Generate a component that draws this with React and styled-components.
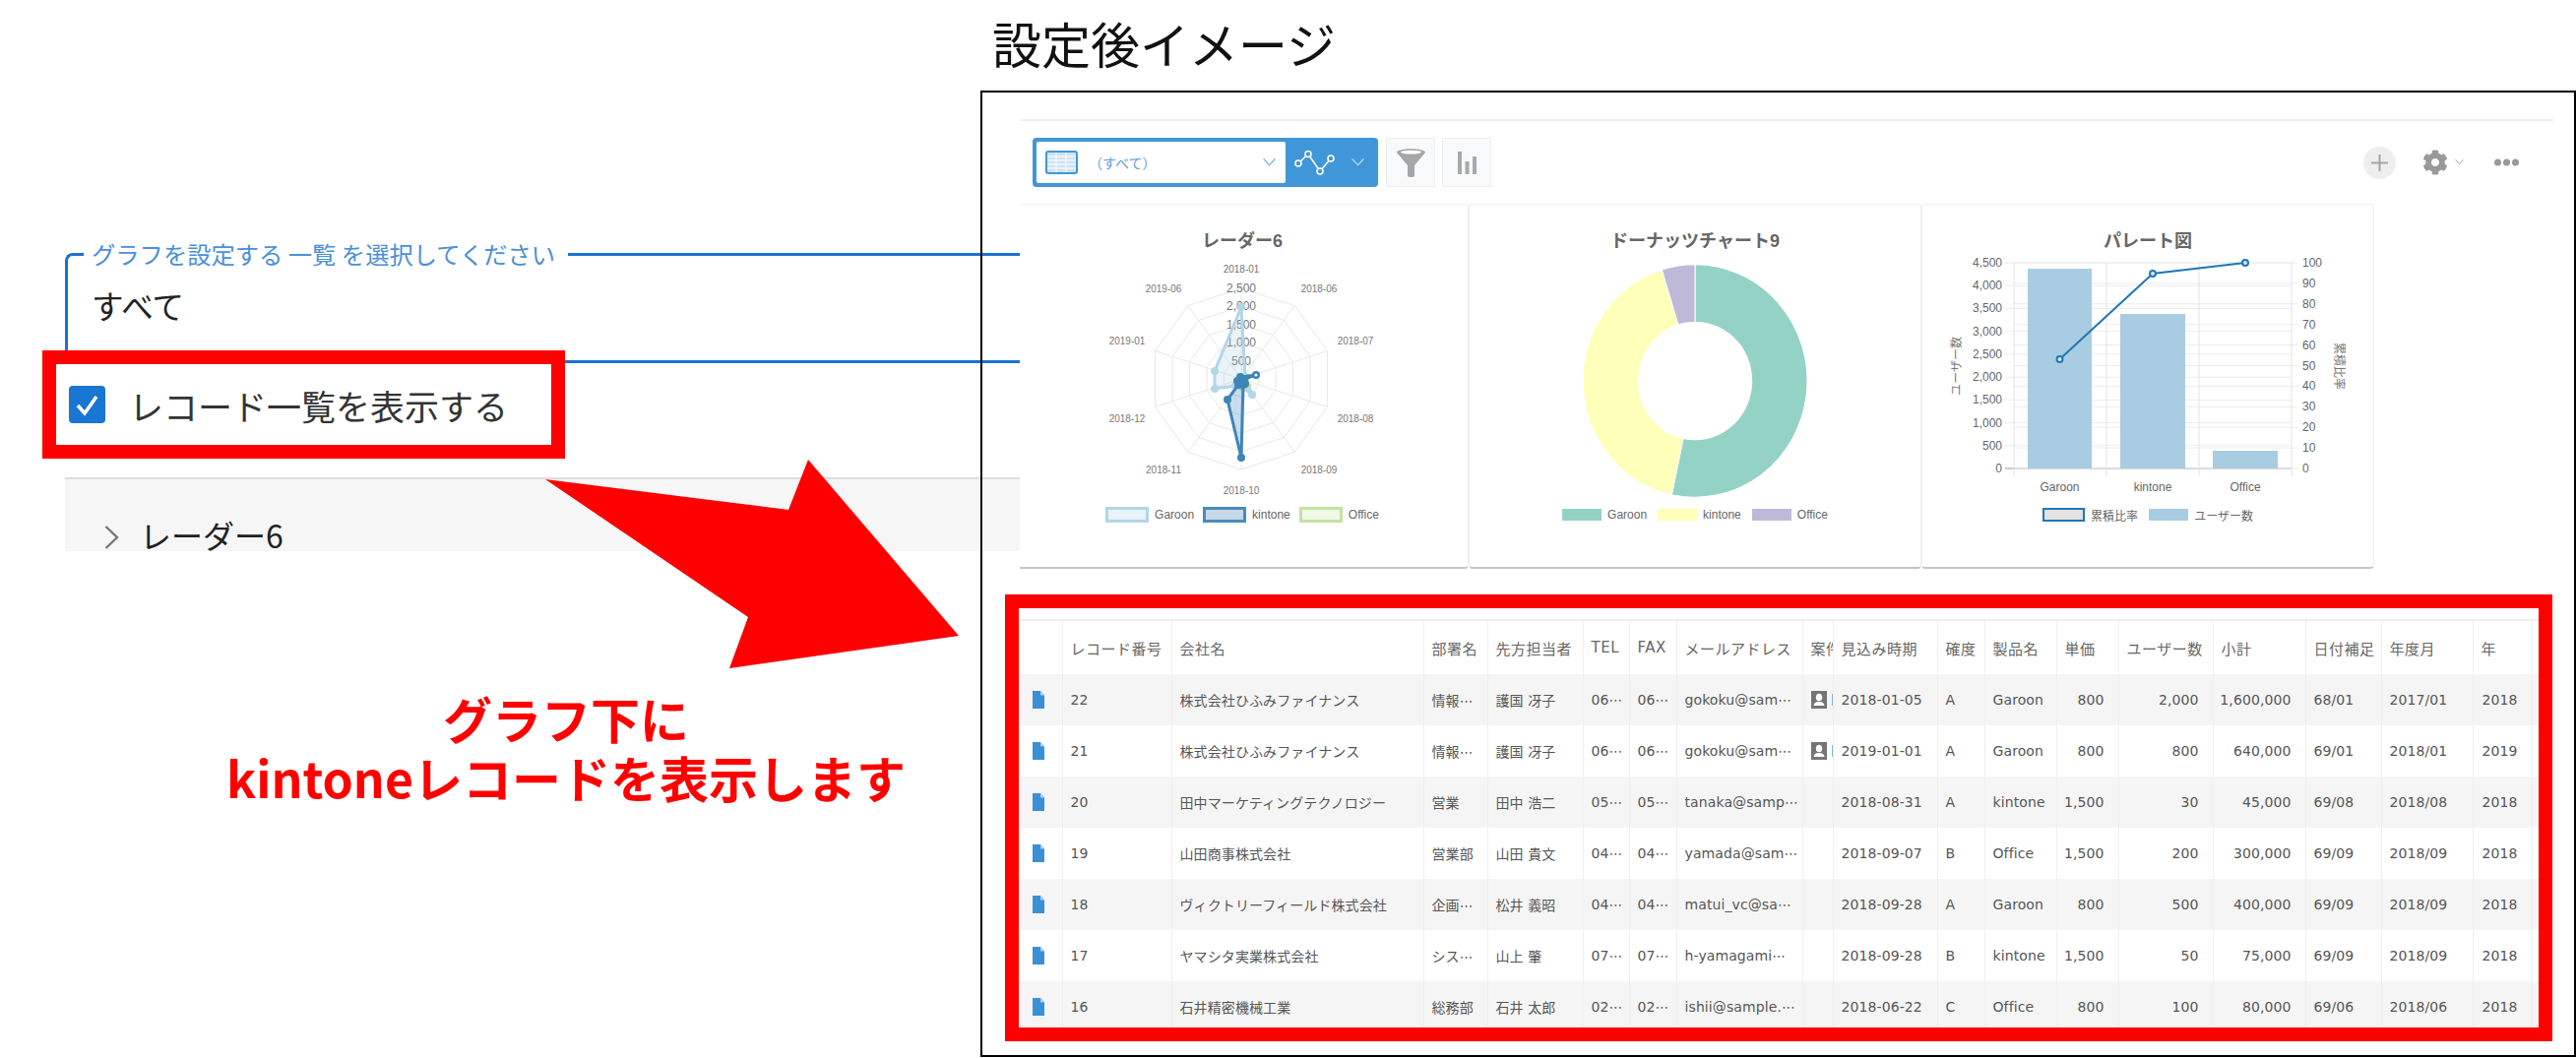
import styled, { createGlobalStyle } from "styled-components";
import { FaCog } from "react-icons/fa";

const JP = `"Noto Sans CJK JP", sans-serif`;
const CHART_FONT = `"Liberation Sans", "Noto Sans CJK JP", sans-serif`;

const columns = [
  { label: "", width: 44 },
  { label: "レコード番号", width: 111 },
  { label: "会社名", width: 256 },
  { label: "部署名", width: 65 },
  { label: "先方担当者", width: 97 },
  { label: "TEL", width: 47 },
  { label: "FAX", width: 48 },
  { label: "メールアドレス", width: 128 },
  { label: "案件", width: 31 },
  { label: "見込み時期", width: 106 },
  { label: "確度", width: 48 },
  { label: "製品名", width: 73 },
  { label: "単価", width: 63, right: true },
  { label: "ユーザー数", width: 96, right: true },
  { label: "小計", width: 94, right: true },
  { label: "日付補足", width: 77 },
  { label: "年度月", width: 93 },
  { label: "年", width: 60, right: true },
  { label: "", width: 7 },
];

const records = [
  ["22", "株式会社ひふみファイナンス", "情報⋯", "護国 冴子", "06⋯", "06⋯", "gokoku@sam⋯", true, "2018-01-05", "A", "Garoon", "800", "2,000", "1,600,000", "68/01", "2017/01", "2018"],
  ["21", "株式会社ひふみファイナンス", "情報⋯", "護国 冴子", "06⋯", "06⋯", "gokoku@sam⋯", true, "2019-01-01", "A", "Garoon", "800", "800", "640,000", "69/01", "2018/01", "2019"],
  ["20", "田中マーケティングテクノロジー", "営業", "田中 浩二", "05⋯", "05⋯", "tanaka@samp⋯", false, "2018-08-31", "A", "kintone", "1,500", "30", "45,000", "69/08", "2018/08", "2018"],
  ["19", "山田商事株式会社", "営業部", "山田 貴文", "04⋯", "04⋯", "yamada@sam⋯", false, "2018-09-07", "B", "Office", "1,500", "200", "300,000", "69/09", "2018/09", "2018"],
  ["18", "ヴィクトリーフィールド株式会社", "企画⋯", "松井 義昭", "04⋯", "04⋯", "matui_vc@sa⋯", false, "2018-09-28", "A", "Garoon", "800", "500", "400,000", "69/09", "2018/09", "2018"],
  ["17", "ヤマシタ実業株式会社", "シス⋯", "山上 肇", "07⋯", "07⋯", "h-yamagami⋯", false, "2018-09-28", "B", "kintone", "1,500", "50", "75,000", "69/09", "2018/09", "2018"],
  ["16", "石井精密機械工業", "総務部", "石井 太郎", "02⋯", "02⋯", "ishii@sample.⋯", false, "2018-06-22", "C", "Office", "800", "100", "80,000", "69/06", "2018/06", "2018"],
];

const radarLabels = [
  ["2018-01", 1261, 274],
  ["2018-06", 1340, 294],
  ["2018-07", 1377, 347],
  ["2018-08", 1377, 426],
  ["2018-09", 1340, 478],
  ["2018-10", 1261, 499],
  ["2018-11", 1182, 478],
  ["2018-12", 1145, 426],
  ["2019-01", 1145, 347],
  ["2019-06", 1182, 294],
];

const radarTicks = [
  ["2,500", 294],
  ["2,000", 312],
  ["1,500", 331],
  ["1,000", 349],
  ["500", 368],
];

const garoonPoints = [[1261, 313], [1265, 384], [1272, 402], [1262, 394], [1255, 393], [1234, 396], [1234, 378]];
const kintonePoints = [[1260, 384], [1276, 382], [1264, 386], [1265, 391], [1263, 392], [1261, 466], [1247, 407], [1258, 392], [1257, 388]];
const officePoints = [[1263, 383], [1267, 385], [1268, 393], [1263, 396], [1256, 390]];

function decagon(cx, cy, r) {
  const pts = [];
  for (let i = 0; i < 10; i++) {
    const a = (i * Math.PI) / 5;
    pts.push([cx + r * Math.sin(a), cy - r * Math.cos(a)]);
  }
  return pts;
}

function toPoints(list) {
  return list.map((p) => p.join(",")).join(" ");
}

function RadarChart() {
  const cx = 1261;
  const cy = 386;
  return (
    <ChartSvg viewBox="1033 260 458 250">
      {[1, 2, 3, 4, 5].map((n) => (
        <polygon key={n} points={toPoints(decagon(cx, cy, n * 18.4))} fill="none" stroke="#e8e8e8" />
      ))}
      {decagon(cx, cy, 92).map((p, i) => (
        <line key={i} x1={cx} y1={cy} x2={p[0]} y2={p[1]} stroke="#e8e8e8" />
      ))}
      {radarLabels.map(([t, x, y]) => (
        <text key={t} x={x} y={y + 4} fontSize="10" fill="#777" textAnchor="middle">
          {t}
        </text>
      ))}
      {radarTicks.map(([t, y]) => (
        <text key={t} x={cx} y={y + 4} fontSize="12" fill="#777" textAnchor="middle">
          {t}
        </text>
      ))}
      <polygon points={toPoints(garoonPoints)} fill="#a6cee3" fillOpacity="0.25" stroke="#b3d5e8" strokeWidth="3" />
      {garoonPoints.map((p, i) => (
        <circle key={i} cx={p[0]} cy={p[1]} r="4" fill="#b3d5e8" />
      ))}
      <polygon points={toPoints(officePoints)} fill="#b2df8a" fillOpacity="0.25" stroke="#c2e3a0" strokeWidth="3" />
      {officePoints.map((p, i) => (
        <circle key={i} cx={p[0]} cy={p[1]} r="3" fill="#c2e3a0" />
      ))}
      <polygon points={toPoints(kintonePoints)} fill="#1f78b4" fillOpacity="0.25" stroke="#3d85b8" strokeWidth="3" />
      {kintonePoints.map((p, i) => (
        <circle key={i} cx={p[0]} cy={p[1]} r="4" fill="#3d85b8" />
      ))}
      <circle cx="1276" cy="382" r="1.5" fill="#fff" />
    </ChartSvg>
  );
}

function slicePath(start, end, outer, inner) {
  const rad = (d) => ((d - 90) * Math.PI) / 180;
  const pt = (r, d) => `${(r * Math.cos(rad(d))).toFixed(2)} ${(r * Math.sin(rad(d))).toFixed(2)}`;
  const large = end - start > 180 ? 1 : 0;
  return `M${pt(outer, start)} A${outer} ${outer} 0 ${large} 1 ${pt(outer, end)} L${pt(inner, end)} A${inner} ${inner} 0 ${large} 0 ${pt(inner, start)} Z`;
}

function DonutChart() {
  return (
    <ChartSvg viewBox="1493 260 458 250">
      <g transform="translate(1722 388) scale(1 1.037)" stroke="#fff" strokeWidth="1">
        <path d={slicePath(0, 192, 114, 57.7)} fill="#94d2c5" />
        <path d={slicePath(192, 342.8, 114, 57.7)} fill="#feffb8" />
        <path d={slicePath(342.8, 360, 114, 57.7)} fill="#bfb9d9" />
      </g>
    </ChartSvg>
  );
}

function ParetoChart() {
  const left = [0, 1, 2, 3, 4, 5, 6, 7, 8, 9];
  const right = [0, 1, 2, 3, 4, 5, 6, 7, 8, 9, 10];
  const linePts = [[2092.5, 366], [2187, 279], [2281, 268]];
  return (
    <ChartSvg viewBox="1953 260 458 250">
      {left.map((i) => {
        const y = 477 - i * 23.22;
        return (
          <g key={i}>
            <line x1="2037" y1={y} x2="2328" y2={y} stroke={i === 0 ? "#ccc" : "#ececec"} strokeWidth={i === 0 ? 2 : 1} />
            <text x="2034" y={y + 4} fontSize="12" fill="#666" textAnchor="end">
              {(i * 500).toLocaleString("en-US")}
            </text>
          </g>
        );
      })}
      {right.map((i) => {
        const y = 477 - i * 20.9;
        return (
          <g key={i}>
            <line x1="2046" y1={y} x2="2335" y2={y} stroke="#ececec" />
            <text x="2339" y={y + 4} fontSize="12" fill="#666">
              {i * 10}
            </text>
          </g>
        );
      })}
      {[2046, 2140, 2234, 2328].map((x) => (
        <line key={x} x1={x} y1="268" x2={x} y2="485" stroke="#e2e2e2" />
      ))}
      <rect x="2060" y="274" width="65" height="203" fill="#a8cce2" />
      <rect x="2154" y="320" width="66" height="157" fill="#a8cce2" />
      <rect x="2248" y="459" width="66" height="18" fill="#a8cce2" />
      <polyline points={toPoints(linePts)} fill="none" stroke="#1f78b4" strokeWidth="2" />
      {linePts.map((p, i) => (
        <circle key={i} cx={p[0]} cy={p[1]} r="3" fill="#d9e6f0" stroke="#1f78b4" strokeWidth="2" />
      ))}
      {[["Garoon", 2092.5], ["kintone", 2187], ["Office", 2281]].map(([t, x]) => (
        <text key={t} x={x} y="500" fontSize="12" fill="#666" textAnchor="middle">
          {t}
        </text>
      ))}
      <text transform="translate(1992 373) rotate(-90)" fontSize="12" fill="#777" textAnchor="middle">
        ユーザー数
      </text>
      <text transform="translate(2372 373) rotate(90)" fontSize="12" fill="#777" textAnchor="middle">
        累積比率
      </text>
    </ChartSvg>
  );
}

function Chevron({ size = 13, color = "#5a9fdc" }) {
  return (
    <svg width={size} height={size * 0.6} viewBox="0 0 13 8" fill="none" stroke={color} strokeWidth="1.1">
      <polyline points="0.5,0.5 6.5,7 12.5,0.5" />
    </svg>
  );
}

function TableIcon() {
  return (
    <svg width="33" height="24" viewBox="0 0 33 24">
      <rect x="1" y="1" width="31" height="22" rx="2" fill="#cfe3f4" stroke="#4097d9" strokeWidth="2" />
      {[6, 10, 14, 18].map((y) => (
        <line key={y} x1="2" y1={y} x2="31" y2={y} stroke="#fff" />
      ))}
      {[11, 21].map((x) => (
        <line key={x} x1={x} y1="2" x2={x} y2="22" stroke="#fff" />
      ))}
    </svg>
  );
}

function LineIcon() {
  return (
    <svg width="41" height="25" viewBox="0 0 41 25" fill="none" stroke="#fff" strokeWidth="1.6">
      <polyline points="4,13 14,3.5 26,21 37,8" />
      <circle cx="4" cy="13" r="3" fill="#3f97d9" />
      <circle cx="14" cy="3.5" r="3" fill="#3f97d9" />
      <circle cx="26" cy="21" r="3" fill="#3f97d9" />
      <circle cx="37" cy="8" r="3" fill="#3f97d9" />
    </svg>
  );
}

function FunnelIcon() {
  return (
    <svg width="29" height="29" viewBox="0 0 29 29">
      <path d="M0 4C0 -1 29 -1 29 4L18 17V27a2 2 0 0 1-2 2h-3a2 2 0 0 1-2-2V17Z" fill="#a6a6a6" />
      <ellipse cx="14.5" cy="3.6" rx="10.5" ry="1.9" fill="#fff" />
    </svg>
  );
}

function BarsIcon() {
  return (
    <svg width="19" height="23" viewBox="0 0 19 23" fill="#a8a8a8">
      <rect x="0" y="0" width="4" height="23" />
      <rect x="7.5" y="10" width="4" height="13" />
      <rect x="15" y="5" width="4" height="18" />
    </svg>
  );
}

function PlusIcon() {
  return (
    <svg width="17" height="17" viewBox="0 0 17 17" stroke="#a6a6a6" strokeWidth="2">
      <line x1="8.500" y1="0" x2="8.500" y2="17" />
      <line x1="0" y1="8.500" x2="17" y2="8.500" />
    </svg>
  );
}

function DocIcon() {
  return (
    <svg width="12" height="18" viewBox="0 0 12 18">
      <path d="M0 0H8L12 4.500V18H0Z" fill="#3b8fd5" />
      <path d="M8 0L12 4.500H8Z" fill="#a9d0ee" />
    </svg>
  );
}

function PersonIcon() {
  return (
    <PersonSvg width="16" height="18" viewBox="0 0 16 18">
      <rect width="16" height="18" fill="#757575" />
      <ellipse cx="8" cy="6.500" rx="3.200" ry="3.800" fill="#fff" />
      <path d="M2.500 15C3 11.500 5.500 11 8 11S13 11.500 13.500 15Z" fill="#fff" />
    </PersonSvg>
  );
}

function DotsIcon() {
  return (
    <svg width="25" height="8" viewBox="0 0 25 8" fill="#999">
      <circle cx="3.500" cy="4" r="3.500" />
      <circle cx="12.500" cy="4" r="3.500" />
      <circle cx="21.500" cy="4" r="3.500" />
    </svg>
  );
}

function ChartLegend({ items, wide }) {
  return (
    <Legend $wide={wide}>
      {items.map((item) => (
        <LegendItem key={item.label}>
          <Swatch $w={item.w} $h={item.h} $border={item.border} $borderWidth={item.borderWidth} $fill={item.fill} />
          {item.label}
        </LegendItem>
      ))}
    </Legend>
  );
}

export default function App() {
  return (
    <>
      <GlobalStyle />
      <Page>
        <PageTitle>設定後イメージ</PageTitle>
        <Body>
          <LeftColumn>
            <ViewField>
              <ViewLegend>グラフを設定する 一覧 を選択してください</ViewLegend>
              <ViewValue>すべて</ViewValue>
            </ViewField>
            <CheckRow>
              <CheckBox>
                <svg width="25" height="25" viewBox="0 0 25 25" fill="none" stroke="#fff" strokeWidth="3.500">
                  <polyline points="3,13 10,21 22,4" />
                </svg>
              </CheckBox>
              <CheckLabel>レコード一覧を表示する</CheckLabel>
            </CheckRow>
            <GreyPanel>
              <svg width="15" height="24" viewBox="0 0 15 24" fill="none" stroke="#777" strokeWidth="2.400">
                <polyline points="1.500,1 13,12 1.500,23" />
              </svg>
              <PanelLabel>レーダー6</PanelLabel>
            </GreyPanel>
            <Callout>
              グラフ下に
              <br />
              kintoneレコードを表示します
            </Callout>
          </LeftColumn>
          <RightColumn>
            <TopRule />
            <Toolbar>
              <Selector>
                <SelectorField>
                  <TableIcon />
                  <SelectorText>（すべて）</SelectorText>
                  <SelectorChevron>
                    <Chevron />
                  </SelectorChevron>
                </SelectorField>
                <SelectorGraph>
                  <LineIcon />
                  <Chevron color="#d5e8f7" />
                </SelectorGraph>
              </Selector>
              <ToolButton>
                <FunnelIcon />
              </ToolButton>
              <ToolButton>
                <BarsIcon />
              </ToolButton>
              <ToolbarRight>
                <PlusButton>
                  <PlusIcon />
                </PlusButton>
                <GearGroup>
                  <FaCog size={26} color="#999" />
                  <Chevron size={9} color="#888" />
                </GearGroup>
                <DotsIcon />
              </ToolbarRight>
            </Toolbar>
            <CardRow>
              <Card $first>
                <CardTitle>レーダー6</CardTitle>
                <RadarChart />
                <ChartLegend
                  wide
                  items={[
                    { label: "Garoon", w: 44, h: 16, border: "#b3d5e8", borderWidth: 3, fill: "#e9f3f9" },
                    { label: "kintone", w: 44, h: 16, border: "#4a8bbd", borderWidth: 3, fill: "#c5d9e8" },
                    { label: "Office", w: 44, h: 16, border: "#c2e3a0", borderWidth: 3, fill: "#f0f8e8" },
                  ]}
                />
              </Card>
              <Card>
                <CardTitle>ドーナッツチャート9</CardTitle>
                <DonutChart />
                <ChartLegend
                  items={[
                    { label: "Garoon", w: 40, h: 12, fill: "#94d2c5" },
                    { label: "kintone", w: 40, h: 12, fill: "#feffb8" },
                    { label: "Office", w: 40, h: 12, fill: "#bfb9d9" },
                  ]}
                />
              </Card>
              <Card>
                <CardTitle>パレート図</CardTitle>
                <ParetoChart />
                <ChartLegend
                  items={[
                    { label: "累積比率", w: 43, h: 14, border: "#1f78b4", borderWidth: 2, fill: "#e3e3e3" },
                    { label: "ユーザー数", w: 40, h: 12, fill: "#a8cce2" },
                  ]}
                />
              </Card>
            </CardRow>
            <TableHighlight>
              <RecordTable>
                <colgroup>
                  {columns.map((c, i) => (
                    <col key={i} width={c.width} />
                  ))}
                </colgroup>
                <thead>
                  <tr>
                    {columns.map((c, i) => (
                      <HeadCell key={i}>{c.label}</HeadCell>
                    ))}
                  </tr>
                </thead>
                <tbody>
                  {records.map((row) => (
                    <Row key={row[0]}>
                      <Cell>
                        <DocCell>
                          <DocIcon />
                        </DocCell>
                      </Cell>
                      {row.map((value, i) => (
                        <Cell key={i} $right={columns[i + 1].right}>
                          {value === true ? (
                            <PersonCell>
                              <PersonIcon />
                              <PersonLink />
                            </PersonCell>
                          ) : (
                            value || ""
                          )}
                        </Cell>
                      ))}
                      <Cell />
                    </Row>
                  ))}
                </tbody>
              </RecordTable>
            </TableHighlight>
          </RightColumn>
          <Frame />
          <Arrow viewBox="554 467 420 212">
            <polygon points="554,487 801,518 821,467 974,646 741,679 760,627" fill="#ff0000" />
          </Arrow>
        </Body>
      </Page>
    </>
  );
}

const GlobalStyle = createGlobalStyle`
  html, body {
    margin: 0;
    padding: 0;
    background: #fff;
  }
`;

const Page = styled.div`
  width: 2617px;
  height: 1075px;
  overflow: hidden;
  background: #fff;
  font-family: ${JP};
`;

const PageTitle = styled.div`
  height: 92px;
  padding-left: 1008px;
  box-sizing: border-box;
  font-size: 50px;
  line-height: 86px;
  color: #111;
`;

const Body = styled.div`
  position: relative;
  display: flex;
  height: 983px;
`;

const LeftColumn = styled.div`
  width: 1036px;
  flex: none;
  padding-top: 151px;
  box-sizing: border-box;
`;

const ViewField = styled.fieldset`
  margin: 0 0 0 66px;
  padding: 0 0 0 27px;
  height: 126px;
  box-sizing: border-box;
  border: 3px solid #1a73d2;
  border-right: none;
  border-radius: 8px 0 0 0;
`;

const ViewLegend = styled.legend`
  margin-left: -11px;
  padding: 0 13px 0 8px;
  font-size: 24.300px;
  line-height: 30px;
  color: #4a90d9;
  white-space: nowrap;
`;

const ViewValue = styled.div`
  margin: 15px 0 0 -3px;
  font-size: 32.500px;
  line-height: 44px;
  color: #222;
`;

const CheckRow = styled.div`
  position: relative;
  display: flex;
  align-items: center;
  gap: 24px;
  margin: -13px 0 0 43px;
  width: 531px;
  height: 110px;
  box-sizing: border-box;
  border: 14px solid #ff0000;
  padding-left: 13px;
  background: #fff;
`;

const CheckBox = styled.div`
  display: flex;
  align-items: center;
  justify-content: center;
  width: 37px;
  height: 38px;
  border-radius: 4px;
  background: #1976d2;
`;

const CheckLabel = styled.span`
  font-size: 35px;
  color: #333;
  white-space: nowrap;
`;

const GreyPanel = styled.div`
  display: flex;
  align-items: center;
  gap: 21px;
  margin: 19px 0 0 66px;
  padding: 44px 0 0 40px;
  height: 75px;
  box-sizing: border-box;
  border-top: 2px solid #ddd;
  background: #f6f6f6;
  overflow: hidden;
`;

const PanelLabel = styled.span`
  margin-bottom: 5px;
  font-size: 32px;
  line-height: 30px;
  color: #222;
`;

const Callout = styled.div`
  margin-top: 139px;
  padding-left: 114px;
  text-align: center;
  font-size: 50px;
  line-height: 60px;
  font-weight: 700;
  color: #ff0000;
`;

const RightColumn = styled.div`
  flex: 1;
  display: flex;
  flex-direction: column;
  background: #fff;
`;

const TopRule = styled.div`
  width: 1558px;
  height: 2px;
  margin-top: 29px;
  background: #eee;
`;

const Toolbar = styled.div`
  display: flex;
  align-items: center;
  gap: 7px;
  width: 1558px;
  height: 50px;
  box-sizing: border-box;
  margin-top: 17px;
  padding: 0 35px 0 13px;
`;

const Selector = styled.div`
  display: flex;
  align-items: center;
  width: 351px;
  height: 50px;
  box-sizing: border-box;
  margin-right: 1px;
  padding: 4px;
  border-radius: 4px;
  background: #3f97d9;
`;

const SelectorField = styled.div`
  display: flex;
  align-items: center;
  gap: 11px;
  width: 253px;
  height: 42px;
  box-sizing: border-box;
  padding: 0 10px 0 9px;
  border-radius: 2px;
  background: #fff;
`;

const SelectorText = styled.span`
  font-size: 14px;
  color: #5a9fdc;
`;

const SelectorChevron = styled.span`
  display: flex;
  margin-left: auto;
`;

const SelectorGraph = styled.div`
  display: flex;
  align-items: center;
  gap: 17px;
  padding-left: 9px;
`;

const ToolButton = styled.div`
  display: flex;
  align-items: center;
  justify-content: center;
  width: 50px;
  height: 50px;
  box-sizing: border-box;
  border: 1px solid #eee;
  background: #f7f9fa;
`;

const ToolbarRight = styled.div`
  display: flex;
  align-items: center;
  gap: 32px;
  margin-left: auto;
`;

const PlusButton = styled.div`
  display: flex;
  align-items: center;
  justify-content: center;
  width: 33px;
  height: 33px;
  border-radius: 50%;
  background: #eee;
`;

const GearGroup = styled.div`
  display: flex;
  align-items: center;
  gap: 7px;
  margin: 0 -1px 0 -5px;
`;

const CardRow = styled.div`
  display: flex;
  height: 373px;
  margin-top: 17px;
  overflow: hidden;
`;

const Card = styled.div`
  flex: none;
  display: flex;
  flex-direction: column;
  width: 460px;
  height: 371px;
  box-sizing: border-box;
  margin-left: ${(p) => (p.$first ? "-4px" : "0")};
  border: 1px solid #eee;
  border-bottom: 2px solid #c4c4c4;
  border-radius: 4px;
  background: #fff;
  font-family: ${CHART_FONT};
`;

const CardTitle = styled.div`
  margin-top: 25px;
  height: 26px;
  font-size: 18px;
  line-height: 25px;
  font-weight: 700;
  color: #666;
  text-align: center;
`;

const ChartSvg = styled.svg`
  flex: none;
  display: block;
  width: 458px;
  height: 250px;
  font-family: ${CHART_FONT};
`;

const Legend = styled.div`
  display: flex;
  justify-content: center;
  gap: ${(p) => (p.$wide ? "9px" : "11px")};
  height: 16px;
  margin-top: 6px;
`;

const LegendItem = styled.div`
  display: flex;
  align-items: center;
  gap: 6px;
  font-size: 12px;
  color: #666;
  white-space: nowrap;
`;

const Swatch = styled.span`
  width: ${(p) => p.$w}px;
  height: ${(p) => p.$h}px;
  box-sizing: border-box;
  border: ${(p) => (p.$border ? `${p.$borderWidth}px solid ${p.$border}` : "none")};
  background: ${(p) => p.$fill};
`;

const TableHighlight = styled.div`
  width: 1572px;
  height: 454px;
  box-sizing: border-box;
  margin: 24px 0 0 -15px;
  padding-top: 11px;
  border: 14px solid #ff0000;
  background: #fff;
  overflow: hidden;
`;

const RecordTable = styled.table`
  width: 1544px;
  table-layout: fixed;
  border-collapse: collapse;
  border-top: 2px solid #eee;
  font-family: "DejaVu Sans", "Noto Sans CJK JP", sans-serif;
  color: #555;
`;

const HeadCell = styled.th`
  height: 54px;
  padding: 0 0 0 8px;
  border-right: 1px solid #efefef;
  font-size: 15px;
  font-weight: 400;
  letter-spacing: 0.500px;
  text-align: left;
  white-space: nowrap;
  overflow: hidden;
  color: #666;
`;

const Row = styled.tr`
  height: 52px;
  &:nth-child(odd) {
    background: #f5f5f5;
  }
`;

const Cell = styled.td`
  padding: ${(p) => (p.$right ? "0 14px 0 0" : "0 0 0 8px")};
  border-right: 1px solid #efefef;
  font-size: 14px;
  letter-spacing: 0.100px;
  text-align: ${(p) => (p.$right ? "right" : "left")};
  white-space: nowrap;
  overflow: hidden;
`;

const DocCell = styled.div`
  display: flex;
  padding-left: 6px;
`;

const PersonCell = styled.div`
  display: flex;
  align-items: center;
  gap: 5px;
`;

const PersonSvg = styled.svg`
  flex: none;
`;

const PersonLink = styled.span`
  flex: none;
  width: 2px;
  height: 12px;
  background: #7fb5e3;
`;

const Frame = styled.div`
  position: absolute;
  left: 996px;
  top: 0;
  width: 1621px;
  height: 982px;
  box-sizing: border-box;
  border: 2px solid #000;
  pointer-events: none;
`;

const Arrow = styled.svg`
  position: absolute;
  left: 554px;
  top: 375px;
  width: 420px;
  height: 212px;
`;
